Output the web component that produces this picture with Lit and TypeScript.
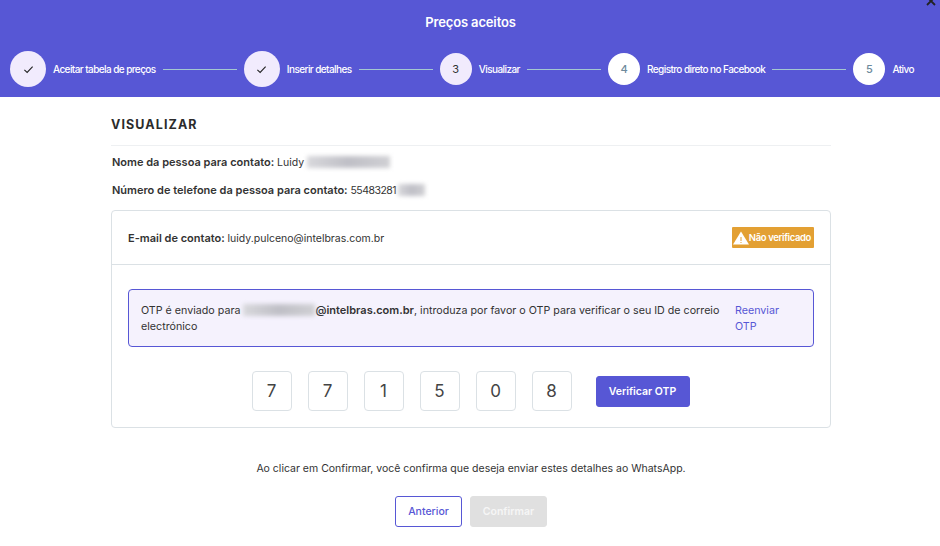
import { LitElement, html, css, nothing } from 'lit';
import { customElement } from 'lit/decorators.js';

type Step = { label: string; big?: boolean; num?: string; current?: boolean };

const STEPS: Step[] = [
  { label: 'Aceitar tabela de preços', big: true },
  { label: 'Inserir detalhes', big: true },
  { label: 'Visualizar', num: '3', current: true },
  { label: 'Registro direto no Facebook', num: '4' },
  { label: 'Ativo', num: '5' },
];

const OTP = ['7', '7', '1', '5', '0', '8'];

@customElement('app-root')
export class AppRoot extends LitElement {
  static styles = css`
    :host {
      display: block;
      height: 546px;
      overflow: hidden;
      background: #fff;
      font-family: Inter, 'Liberation Sans', sans-serif;
      color: #333;
      font-size: 11px;
    }

    header {
      position: relative;
      height: 97px;
      background: #5757d5;
      color: #fff;
      overflow: hidden;
    }
    .title {
      padding: 14px 0 0 1px;
      height: 34px;
      line-height: 17px;
      text-align: center;
      font-size: 13px;
      font-weight: 600;
      letter-spacing: -0.15px;
    }
    .close {
      position: absolute;
      top: -4px;
      right: 4px;
      width: 10px;
      height: 10px;
    }
    .steps {
      display: flex;
      align-items: center;
      height: 36px;
      margin-top: 3px;
      padding: 0 26px 0 10px;
    }
    .step {
      display: flex;
      align-items: center;
      gap: 7px;
      font-size: 10px;
      font-weight: 500;
      letter-spacing: -0.58px;
      white-space: nowrap;
    }
    .circle {
      display: flex;
      align-items: center;
      justify-content: center;
      width: 32px;
      height: 32px;
      border-radius: 50%;
      background: #fff;
      color: #6d8a9c;
      font-size: 11px;
      font-weight: 500;
      letter-spacing: 0;
    }
    .circle.big {
      width: 36px;
      height: 36px;
      background: #f1ebfd;
      color: #333;
    }
    .circle.current {
      background: #f1ebfd;
      color: #333;
      font-weight: 400;
    }
    .circle svg { width: 11px; height: 11px; }
    .line {
      flex: 1;
      height: 1px;
      margin: 0 7px;
      background: #a4c8d0;
    }

    main {
      width: 720px;
      margin-left: 111px;
    }
    h2 {
      margin: 0;
      padding: 19px 0 12px;
      height: 17px;
      line-height: 17px;
      font-size: 12.5px;
      font-weight: 700;
      letter-spacing: 1.1px;
      color: #2b2b2b;
      border-bottom: 1px solid #eef0f2;
    }
    .field {
      display: flex;
      align-items: center;
      height: 14px;
      margin-top: 14px;
      padding-left: 1px;
      white-space: pre;
      font-size: 10.5px;
    }
    .field.first { margin-top: 9px; }
    b {
      font-size: 11px;
      font-weight: 600;
    }
    .digits { letter-spacing: -0.5px; }
    .blur {
      display: inline-block;
      height: 12px;
      background: linear-gradient(90deg, #d8d8dc, #bfbfc6 50%, #d0d0d4);
      filter: blur(2px);
    }
    .blur.name { width: 83px; }
    .blur.phone {
      width: 27px;
      margin-left: 2px;
    }
    .card {
      margin-top: 13px;
      height: 218px;
      box-sizing: border-box;
      border: 1px solid #dbe1e5;
      border-radius: 4px;
    }
    .card-head {
      display: flex;
      align-items: center;
      justify-content: space-between;
      box-sizing: border-box;
      height: 54px;
      padding: 1px 16px 0;
      border-bottom: 1px solid #dbe1e5;
      font-size: 10.5px;
    }
    .badge {
      display: flex;
      align-items: center;
      height: 21px;
      margin-top: -1px;
      padding: 0 3px 0 1px;
      border-radius: 1px;
      background: #e3a033;
      color: #fff;
      font-size: 9.5px;
      font-weight: 600;
      letter-spacing: -0.36px;
    }
    .badge svg { width: 16px; height: 14px; }
    .alert {
      display: flex;
      align-items: center;
      justify-content: space-between;
      box-sizing: border-box;
      height: 58px;
      margin: 24px 16px 0;
      padding: 1px 12px 0;
      border: 1px solid #5757d5;
      border-radius: 4px;
      background: #f5f2fd;
      line-height: 16px;
      font-size: 10.7px;
    }
    .alert p { margin: 0; width: 590px; }
    .alert strong {
      font-size: 11px;
      font-weight: 600;
    }
    .alert .blur { width: 72px; vertical-align: -2px; }
    .alert a {
      width: 56px;
      margin-right: 10px;
      color: #5757d5;
    }
    .otp {
      display: flex;
      align-items: center;
      justify-content: center;
      gap: 16px;
      margin-top: 24px;
      padding-right: 1px;
    }
    .digit {
      display: flex;
      align-items: center;
      justify-content: center;
      box-sizing: border-box;
      width: 40px;
      height: 40px;
      border: 1px solid #dbe1e5;
      border-radius: 4px;
      font-size: 17px;
      color: #444;
    }
    button {
      height: 31px;
      box-sizing: border-box;
      border-radius: 3px;
      border: 1px solid #5757d5;
      font: inherit;
      font-size: 10.5px;
      font-weight: 500;
      padding: 0;
    }
    .primary {
      width: 94px;
      margin-left: 8px;
      background: #5757d5;
      color: #fff;
      font-weight: 600;
    }
    .note {
      margin: 34px 0 0;
      height: 14px;
      line-height: 14px;
      text-align: center;
      font-size: 10.5px;
    }
    .actions {
      display: flex;
      justify-content: center;
      gap: 8px;
      margin-top: 20px;
    }
    .outline {
      width: 67px;
      background: #fff;
      color: #5757d5;
    }
    .disabled {
      width: 77px;
      border-color: #e0e0e0;
      background: #e0e0e0;
      color: #f6f6f6;
      font-weight: 600;
    }
  `;

  renderStep(s: Step, i: number) {
    const cls = `circle${s.big ? ' big' : ''}${s.current ? ' current' : ''}`;
    return html`
      <div class="step">
        <div class=${cls}>
          ${s.big
            ? html`<svg viewBox="0 0 12 12" fill="none" stroke="#222" stroke-width="1.2">
                <path d="M1.5 6.5 4.5 9.2 10.5 2.8" />
              </svg>`
            : s.num}
        </div>
        <span>${s.label}</span>
      </div>
      ${i < STEPS.length - 1 ? html`<div class="line"></div>` : nothing}
    `;
  }

  render() {
    return html`
      <header>
        <div class="title">Preços aceitos</div>
        <svg class="close" viewBox="0 0 10 10" fill="none" stroke="#222" stroke-width="1.8">
          <path d="M1 1 9 9M9 1 1 9" />
        </svg>
        <div class="steps">${STEPS.map((s, i) => this.renderStep(s, i))}</div>
      </header>
      <main>
        <h2>VISUALIZAR</h2>
        <div class="field first">
          <b>Nome da pessoa para contato: </b>Luidy <span class="blur name"></span>
        </div>
        <div class="field">
          <b>Número de telefone da pessoa para contato: </b><span class="digits">55483281</span><span class="blur phone"></span>
        </div>
        <section class="card">
          <div class="card-head">
            <div><b>E-mail de contato: </b>luidy.pulceno@intelbras.com.br</div>
            <div class="badge">
              <svg viewBox="0 0 16 14">
                <path fill="#fff" d="M8 0.5 16 13.5H0Z" />
                <path fill="#e3a033" d="M7.5 6h1v4h-1zM7.5 11h1v1h-1z" />
              </svg>
              Não verificado
            </div>
          </div>
          <div class="alert">
            <p>
              OTP é enviado para <span class="blur"></span><strong>@intelbras.com.br</strong>, introduza por favor o OTP
              para verificar o seu ID de correio electrónico
            </p>
            <a>Reenviar OTP</a>
          </div>
          <div class="otp">
            ${OTP.map((d) => html`<div class="digit">${d}</div>`)}
            <button class="primary">Verificar OTP</button>
          </div>
        </section>
        <p class="note">Ao clicar em Confirmar, você confirma que deseja enviar estes detalhes ao WhatsApp.</p>
        <div class="actions">
          <button class="outline">Anterior</button>
          <button class="disabled">Confirmar</button>
        </div>
      </main>
    `;
  }
}
